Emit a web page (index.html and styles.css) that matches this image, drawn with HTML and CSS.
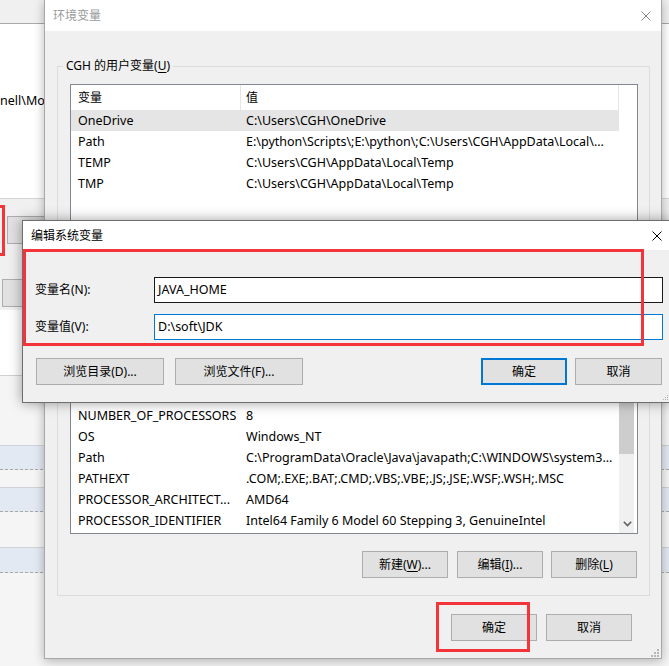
FILE: index.html
```html
<!DOCTYPE html>
<html lang="zh-CN">
<head>
<meta charset="utf-8">
<title>环境变量</title>
<link rel="stylesheet" href="styles.css">
</head>
<body>
<div class="desk">
  <div class="bg">
    <div class="bg-top"></div>
    <div class="bg-white"><div class="bg-path">nell\Modules</div></div>
    <div class="bg-panel">
      <div class="bg-btn bg-btn1"></div>
      <div class="bg-btn bg-btn2"></div>
    </div>
    <div class="bg-white2"></div>
    <div class="bg-list">
      <div class="bg-band b1"></div>
      <div class="bg-band b2"></div>
      <div class="bg-band b3"></div>
    </div>
  </div>

  <div class="win main">
    <div class="titlebar main-title">
      <span class="title-text">环境变量</span>
      <svg class="close close-main" width="10" height="10" viewBox="0 0 10 10"><path d="M0.5 0.5L9.5 9.5M9.5 0.5L0.5 9.5" stroke="#8a8a8a" stroke-width="1" fill="none"/></svg>
    </div>
    <div class="main-body">
      <div class="group g1">
        <span class="legend">CGH 的用户变量(<u>U</u>)</span>
        <div class="list ulist">
          <div class="lv-cols">
            <div class="lv-head"><span class="c1">变量</span><span class="c2">值</span></div>
            <div class="lv-row sel"><span class="c1">OneDrive</span><span class="c2">C:\Users\CGH\OneDrive</span></div>
            <div class="lv-row"><span class="c1">Path</span><span class="c2">E:\python\Scripts\;E:\python\;C:\Users\CGH\AppData\Local\...</span></div>
            <div class="lv-row"><span class="c1">TEMP</span><span class="c2">C:\Users\CGH\AppData\Local\Temp</span></div>
            <div class="lv-row"><span class="c1">TMP</span><span class="c2">C:\Users\CGH\AppData\Local\Temp</span></div>
          </div>
        </div>
        <div class="btnrow group-btns">
          <button class="btn">新建(<u>N</u>)...</button>
          <button class="btn">编辑(<u>E</u>)...</button>
          <button class="btn">删除(<u>D</u>)</button>
        </div>
      </div>
      <div class="group g2">
        <span class="legend legend-empty"></span>
        <div class="list slist">
          <div class="lv-cols">
            <div class="lv-head"><span class="c1"></span><span class="c2"></span></div>
            <div class="lv-row"><span class="c1">DriverData</span><span class="c2">C:\Windows\System32\Drivers\DriverData</span></div>
            <div class="lv-row"><span class="c1">NUMBER_OF_PROCESSORS</span><span class="c2">8</span></div>
            <div class="lv-row"><span class="c1">OS</span><span class="c2">Windows_NT</span></div>
            <div class="lv-row"><span class="c1">Path</span><span class="c2">C:\ProgramData\Oracle\Java\javapath;C:\WINDOWS\system3...</span></div>
            <div class="lv-row"><span class="c1">PATHEXT</span><span class="c2">.COM;.EXE;.BAT;.CMD;.VBS;.VBE;.JS;.JSE;.WSF;.WSH;.MSC</span></div>
            <div class="lv-row"><span class="c1">PROCESSOR_ARCHITECT...</span><span class="c2">AMD64</span></div>
            <div class="lv-row"><span class="c1">PROCESSOR_IDENTIFIER</span><span class="c2">Intel64 Family 6 Model 60 Stepping 3, GenuineIntel</span></div>
          </div>
          <div class="vscroll">
            <div class="vs-track">
              <div class="vs-up"></div>
              <div class="vs-thumb"></div>
              <div class="vs-fill"></div>
              <div class="vs-down">
                <svg width="9" height="6" viewBox="0 0 9 6"><path d="M0.8 0.8L4.5 4.5L8.2 0.8" stroke="#606060" stroke-width="1.6" fill="none"/></svg>
              </div>
            </div>
          </div>
        </div>
        <div class="btnrow group-btns">
          <button class="btn">新建(<u>W</u>)...</button>
          <button class="btn">编辑(<u>I</u>)...</button>
          <button class="btn">删除(<u>L</u>)</button>
        </div>
      </div>
      <div class="btnrow dlg-btns">
        <button class="btn">确定</button>
        <button class="btn">取消</button>
      </div>
    </div>
    <svg class="grip grip-main" width="9" height="9" viewBox="0 0 9 9"><g fill="#b5b5b5"><rect x="7" y="1" width="2" height="2"/><rect x="4" y="4" width="2" height="2"/><rect x="7" y="4" width="2" height="2"/><rect x="1" y="7" width="2" height="2"/><rect x="4" y="7" width="2" height="2"/><rect x="7" y="7" width="2" height="2"/></g></svg>
  </div>

  <div class="win edit">
    <div class="titlebar edit-title">
      <span class="title-text dark">编辑系统变量</span>
      <svg class="close close-edit" width="10" height="10" viewBox="0 0 10 10"><path d="M0.5 0.5L9.5 9.5M9.5 0.5L0.5 9.5" stroke="#000" stroke-width="1" fill="none"/></svg>
    </div>
    <div class="edit-body">
      <div class="fields">
        <span class="flabel">变量名(N):</span>
        <div class="input">JAVA_HOME</div>
        <span class="flabel">变量值(V):</span>
        <div class="input focus">D:\soft\JDK</div>
      </div>
      <div class="btnrow edit-btns">
        <button class="btn wide first">浏览目录(D)...</button>
        <button class="btn wide second">浏览文件(F)...</button>
        <button class="btn default ok">确定</button>
        <button class="btn cancel">取消</button>
      </div>
    </div>
    <svg class="grip grip-edit" width="6" height="6" viewBox="0 0 6 6"><g fill="#b5b5b5"><rect x="5" y="1" width="1" height="1"/><rect x="3" y="3" width="1" height="1"/><rect x="5" y="3" width="1" height="1"/><rect x="1" y="5" width="1" height="1"/><rect x="3" y="5" width="1" height="1"/><rect x="5" y="5" width="1" height="1"/></g></svg>
  </div>

  <div class="mark mark-edit"></div>
  <div class="mark mark-ok"></div>
  <div class="mark mark-left"></div>
</div>
</body>
</html>
```

FILE: styles.css
```css
* { box-sizing: border-box; }
html, body { margin: 0; padding: 0; }
body {
  width: 669px;
  height: 666px;
  overflow: hidden;
  font-family: "Noto Sans", "Noto Sans CJK SC", sans-serif;
  font-size: 12px;
  color: #000;
  background: #f5f5f5;
}
u { text-decoration: underline; text-underline-offset: 2px; }

.desk { position: relative; width: 669px; height: 666px; overflow: hidden; }

/* background window */
.bg { width: 669px; }
.bg-top { height: 24px; background: #f0f0f0; border-bottom: 1px solid #a9a9a9; }
.bg-white { height: 174px; background: #fff; padding-top: 69px; }
.bg-path { margin-left: 0; font-size: 12.5px; line-height: 16px; white-space: nowrap; }
.bg-panel { height: 112px; background: #f0f0f0; border-top: 1px solid #d4d4d4; overflow: hidden; }
.bg-btn { height: 28px; width: 120px; background: #e1e1e1; border: 1px solid #adadad; }
.bg-btn1 { margin: 17px 0 0 7px; }
.bg-btn2 { margin: 35px 0 0 2px; }
.bg-white2 { height: 66px; background: #fff; border-bottom: 1px solid #d0d0d0; }
.bg-list { height: 290px; background: #f5f5f5; padding-top: 69px; }
.bg-band { background: #e3e9f2; border-top: 1px solid #cfd3d8; border-bottom: 1px dashed #a8a8a8; height: 25px; }
.b2 { margin-top: 17px; }
.b3 { margin-top: 35px; height: 26px; }

/* windows */
.win { position: absolute; background: #f0f0f0; overflow: hidden; }
.main {
  left: 44px; top: -1px; width: 618px; height: 660px;
  border: 1px solid #a8a8a8;
  box-shadow: 0 2px 10px rgba(0,0,0,0.28);
}
.titlebar { display: flex; align-items: center; background: #fff; }
.main-title { height: 31px; padding-left: 8px; }
.title-text { flex: 1; color: #9a9a9a; line-height: 16px; }
.title-text.dark { color: #000; }
.close-main { margin-right: 10px; }
.close-edit { margin-right: 7px; }

.main-body { padding: 0 11px 0 12px; }
.group { border: 1px solid #dcdcdc; padding: 0 11px 16px 12px; }
.g1 { margin-top: 35px; }
.g2 { margin-top: 25px; padding-bottom: 17px; }
.legend {
  display: block; width: max-content;
  margin: -9px 0 0 -7px; padding: 0 3px;
  height: 16px; line-height: 16px;
  background: #f0f0f0;
}
.legend-empty { width: 80px; }

.list { margin-top: 10px; background: #fff; border: 1px solid #828790; overflow: hidden; display: flex; }
.ulist { height: 170px; }
.slist { height: 176px; }
.lv-cols { width: 548px; flex: none; }
.lv-head { display: flex; height: 25px; align-items: center; }
.lv-head .c1 { border-right: 1px solid #e5e5e5; height: 25px; line-height: 25px; }
.lv-head .c2 { border-right: 1px solid #e5e5e5; height: 25px; line-height: 25px; }
.lv-row { display: flex; height: 21px; line-height: 21px; white-space: nowrap; font-size: 12.5px; }
.lv-row.sel { background: #e5e5e5; }
.c1 { width: 170px; padding-left: 7px; overflow: hidden; flex: none; }
.c2 { width: 378px; padding-left: 5px; overflow: hidden; flex: none; }

.vscroll { margin-left: auto; width: 18px; background: #fff; }
.vs-track { width: 15px; height: 100%; background: #f0f0f0; display: flex; flex-direction: column; }
.vs-up { height: 17px; }
.vs-thumb { height: 78px; background: #cdcdcd; }
.vs-fill { flex: 1; }
.vs-down { height: 17px; display: flex; align-items: center; justify-content: center; padding-bottom: 2px; padding-left: 1px; }

.btnrow { display: flex; }
.btn {
  font: inherit; color: #000;
  height: 27px; width: 86px;
  background: #e1e1e1; border: 1px solid #adadad;
  padding: 0; margin: 0;
  line-height: 16px;
}
.group-btns { margin-top: 17px; justify-content: flex-end; gap: 8px; padding-right: 1px; }
.group-btns .btn:first-child { margin-right: 1px; }
.dlg-btns { margin-top: 18px; justify-content: flex-end; gap: 9px; padding-right: 18px; }

.grip { position: absolute; }
.grip-main { right: 2px; bottom: 1px; }
.grip-edit { right: 1px; bottom: 2px; }

/* edit dialog */
.edit {
  left: 22px; top: 220px; width: 648px; height: 183px;
  border: 1px solid #6e6e6e;
  box-shadow: 0 0 12px rgba(0,0,0,0.38);
}
.edit-title { height: 29px; padding-left: 8px; }
.edit-body { padding: 27px 6px 0 12px; }
.fields { display: grid; grid-template-columns: 119px 1fr; grid-auto-rows: 26px; row-gap: 11px; align-items: center; }
.flabel { line-height: 16px; }
.input {
  height: 26px; background: #fff; border: 1px solid #1a1a1a;
  padding-left: 3px; line-height: 24px; white-space: nowrap; font-size: 12.5px;
}
.input.focus { border-color: #0078d7; }
.edit-btns { margin-top: 18px; }
.btn.wide { width: 128px; }
.btn.first { margin-left: 1px; }
.btn.second { margin-left: 11px; }
.btn.ok { margin-left: auto; }
.btn.default { border: 2px solid #0078d7; }
.btn.cancel { width: 87px; margin-left: 8px; margin-right: 1px; }

/* annotation boxes */
.mark { position: absolute; border: 3px solid #f3343b; }
.mark-edit { left: 23px; top: 249px; width: 621px; height: 97px; }
.mark-ok { left: 436px; top: 602px; width: 94px; height: 50px; }
.mark-left { left: -60px; top: 205px; width: 65px; height: 51px; }
```
